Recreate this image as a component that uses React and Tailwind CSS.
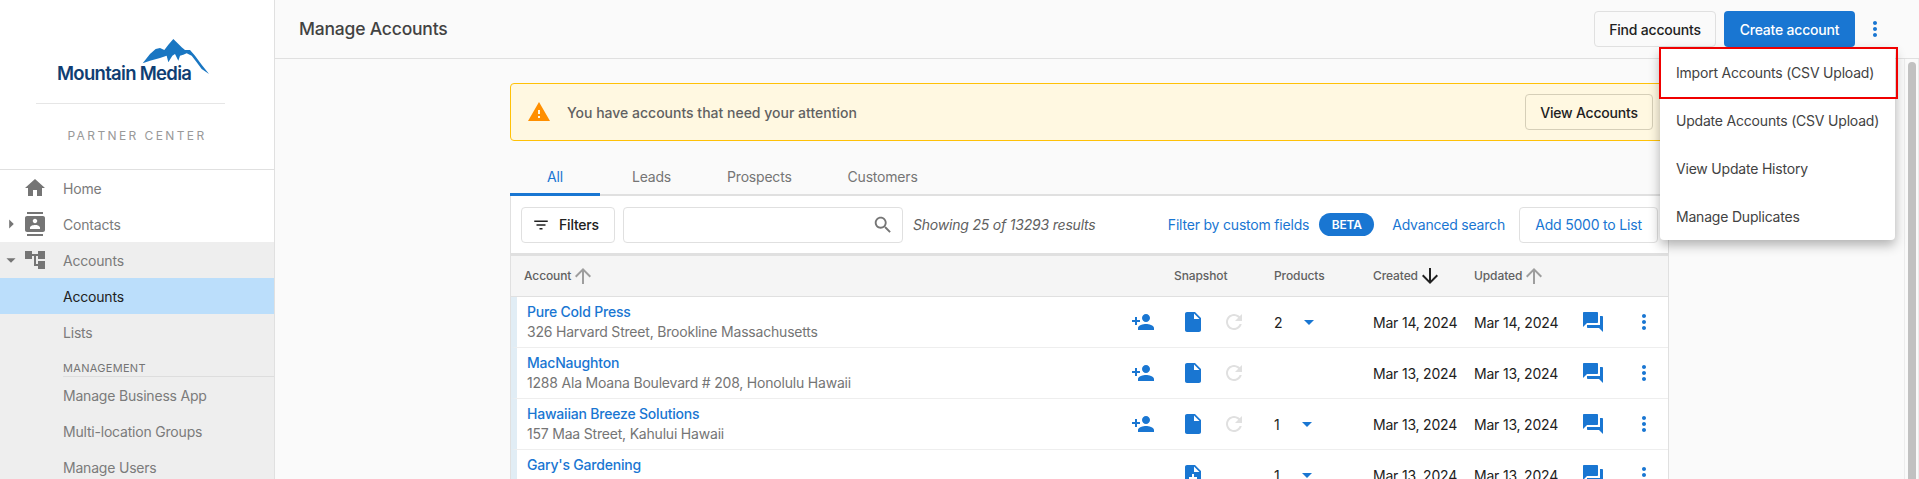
const paths = {
  home: "M10 20v-6h4v6h5v-8h3L12 3 2 12h3v8z",
  contacts:
    "M20 0H4v2h16V0zM4 24h16v-2H4v2zM20 4H4c-1.1 0-2 .9-2 2v12c0 1.1.9 2 2 2h16c1.1 0 2-.9 2-2V6c0-1.1-.9-2-2-2zm-8 2.75c1.24 0 2.25 1.01 2.25 2.25s-1.01 2.25-2.25 2.25S9.75 10.24 9.75 9 10.76 6.75 12 6.75zM17 17H7v-1.5c0-1.67 3.33-2.5 5-2.5s5 .83 5 2.5V17z",
  tree: "M22 11V3h-7v3H9V3H2v8h7V8h2v10h4v3h7v-8h-7v3h-2V8h2v3z",
  caretRight: "M10 17l5-5-5-5v10z",
  caretDown: "M7 10l5 5 5-5z",
  personAdd:
    "M15 12c2.21 0 4-1.79 4-4s-1.79-4-4-4-4 1.79-4 4 1.79 4 4 4zm-9-2V7H4v3H1v2h3v3h2v-3h3v-2H6zm9 4c-2.67 0-8 1.34-8 4v2h16v-2c0-2.66-5.33-4-8-4z",
  file: "M6 2c-1.1 0-1.99.9-1.99 2L4 20c0 1.1.89 2 1.99 2H18c1.1 0 2-.9 2-2V8l-6-6H6zm7 7V3.5L18.5 9H13z",
  noteAdd:
    "M14 2H6c-1.1 0-1.99.9-1.99 2L4 20c0 1.1.89 2 1.99 2H18c1.1 0 2-.9 2-2V8l-6-6zm2 14h-3v3h-2v-3H8v-2h3v-3h2v3h3v2zm-3-7V3.5L18.5 9H13z",
  refresh:
    "M17.65 6.35C16.2 4.9 14.21 4 12 4c-4.42 0-7.99 3.58-7.99 8s3.57 8 7.99 8c3.73 0 6.84-2.55 7.73-6h-2.08c-.82 2.33-3.04 4-5.65 4-3.31 0-6-2.69-6-6s2.69-6 6-6c1.66 0 3.14.69 4.22 1.78L13 11h7V4l-2.35 2.35z",
  forum:
    "M21 6h-2v9H6v2c0 .55.45 1 1 1h11l4 4V7c0-.55-.45-1-1-1zm-4 6V3c0-.55-.45-1-1-1H3c-.55 0-1 .45-1 1v14l4-4h10c.55 0 1-.45 1-1z",
  more: "M12 8c1.1 0 2-.9 2-2s-.9-2-2-2-2 .9-2 2 .9 2 2 2zm0 2c-1.1 0-2 .9-2 2s.9 2 2 2 2-.9 2-2-.9-2-2-2zm0 6c-1.1 0-2 .9-2 2s.9 2 2 2 2-.9 2-2-.9-2-2-2z",
  warning: "M1 21h22L12 2 1 21zm12-3h-2v-2h2v2zm0-4h-2v-4h2v4z",
  filter: "M10 18h4v-2h-4v2zM3 6v2h18V6H3zm3 7h12v-2H6v2z",
  search:
    "M15.5 14h-.79l-.28-.27C15.41 12.59 16 11.11 16 9.5 16 5.91 13.09 3 9.5 3S3 5.91 3 9.5 5.91 16 9.5 16c1.61 0 3.09-.59 4.23-1.57l.27.28v.79l5 4.99L20.49 19l-4.99-5zm-6 0C7.01 14 5 11.99 5 9.5S7.01 5 9.5 5 14 7.01 14 9.5 11.99 14 9.5 14z",
  up: "M4 12l1.41 1.41L11 7.83V20h2V7.83l5.58 5.59L20 12l-8-8-8 8z",
  down: "M20 12l-1.41-1.41L13 16.17V4h-2v12.17l-5.58-5.59L4 12l8 8 8-8z",
};

function Icon({ name, className = "" }) {
  return (
    <svg viewBox="0 0 24 24" fill="currentColor" className={`shrink-0 ${className}`}>
      <path d={paths[name]} />
    </svg>
  );
}

const navTop = [
  { label: "Home", icon: "home" },
  { label: "Contacts", icon: "contacts", caret: "caretRight" },
];

const navSub = ["Manage Business App", "Multi-location Groups", "Manage Users"];

function NavRow({ label, icon, caret, className = "" }) {
  return (
    <div className={`flex h-9 items-center text-[14px] text-[#7b7b7b] ${className}`}>
      <div className="flex w-[22px] justify-center">
        {caret && <Icon name={caret} className="h-[22px] w-[22px] text-[#757575]" />}
      </div>
      <div className="flex w-[26px] justify-center">
        {icon && <Icon name={icon} className="h-6 w-6 text-[#757575]" />}
      </div>
      <span className="ml-[15px]">{label}</span>
    </div>
  );
}

function Sidebar() {
  return (
    <aside className="flex h-full w-[275px] shrink-0 flex-col border-r border-[#e0e0e0] bg-white">
      <div className="h-[170px] shrink-0 border-b border-[#e0e0e0]">
        <div className="relative ml-9 h-[104px] w-[189px] border-b border-[#e6e6e6]">
          <span className="absolute left-[21px] top-[61px] text-[18.5px] font-semibold leading-6 tracking-[-0.7px] text-[#0f3e73]">
            Mountain Media
          </span>
          <svg viewBox="0 0 240 150" className="absolute left-[99px] top-[34px] h-[50px] w-[80px]" fill="#1976c2">
            <path d="M23 88 L45 60 L62 45 L75 42 L88 48 L100 32 L115 15 L128 28 L140 40 L150 48 L165 48 L180 65 L200 92 L222 120 L200 105 L185 85 L170 65 L155 58 L145 62 L135 65 L130 80 L120 60 L112 65 L100 85 L95 65 L75 72 L45 80 Z" />
          </svg>
        </div>
        <div className="mt-[24px] text-center text-[12px] leading-4 tracking-[2.4px] text-[#999999]">PARTNER CENTER</div>
      </div>
      <div className="bg-white">
        {navTop.map((item) => (
          <NavRow key={item.label} {...item} />
        ))}
      </div>
      <div className="flex-1 overflow-hidden bg-[#eeeeee]">
        <NavRow label="Accounts" icon="tree" caret="caretDown" />
        <NavRow label="Accounts" className="bg-[#bbdefb] !text-[#212121]" />
        <NavRow label="Lists" />
        <div className="ml-[63px] mt-[10px] border-b border-[#dddddd] text-[11px] leading-4 tracking-[0.3px] text-[#757575]">
          MANAGEMENT
        </div>
        {navSub.map((label) => (
          <NavRow key={label} label={label} />
        ))}
      </div>
    </aside>
  );
}

function Header() {
  return (
    <header className="flex h-[59px] shrink-0 items-center justify-between border-b border-[#e0e0e0] pl-6 pr-[32px]">
      <h1 className="text-[17.5px] font-medium text-[#424242]">Manage Accounts</h1>
      <div className="flex items-center">
        <button className="h-9 w-[122px] rounded border border-[#e0e0e0] text-[14px] font-[450] text-[#212121]">
          Find accounts
        </button>
        <button className="ml-2 h-9 w-[131px] rounded bg-[#1976d2] text-[14px] font-[450] text-white">
          Create account
        </button>
        <Icon name="more" className="ml-2 h-6 w-6 text-[#1976d2]" />
      </div>
    </header>
  );
}

function Banner() {
  return (
    <div className="flex h-[58px] items-center rounded border border-[#ffc107] bg-[#fff8e1] pl-[16px] pr-[15px]">
      <Icon name="warning" className="h-6 w-6 text-[#ff8f00]" />
      <span className="ml-4 flex-1 text-[14px] font-medium tracking-normal text-[#616161]">
        You have accounts that need your attention
      </span>
      <button className="h-9 w-[128px] rounded border border-[#d6cfb8] text-[14px] font-[450] text-[#212121]">
        View Accounts
      </button>
    </div>
  );
}

function Tabs() {
  return (
    <div className="mt-[18px] flex h-[37px] gap-2 border-b-2 border-[#e0e0e0] text-[14px] text-[#757575]">
      <div className="-mb-0.5 flex w-[90px] items-center justify-center border-b-[3px] border-[#1976d2] text-[#1976d2]">All</div>
      <div className="flex items-center px-6">Leads</div>
      <div className="flex items-center px-6">Prospects</div>
      <div className="flex items-center px-6">Customers</div>
    </div>
  );
}

function Toolbar() {
  return (
    <div className="flex h-[60px] items-center border-b-[3px] border-[#e0e0e0] bg-white pl-[10px] text-[14px]">
      <button className="flex h-9 w-[94px] items-center rounded border border-[#e0e0e0] pl-[10px] font-[450] text-[#212121]">
        <Icon name="filter" className="mr-[9px] h-[18px] w-[18px]" />
        Filters
      </button>
      <div className="ml-2 flex h-9 w-[280px] items-center justify-end rounded border border-[#e0e0e0] pr-2">
        <Icon name="search" className="h-[22px] w-[22px] text-[#757575]" />
      </div>
      <span className="ml-[10px] italic text-[#616161]">Showing 25 of 13293 results</span>
      <div className="ml-auto flex items-center pr-[10px] text-[#1976d2]">
        <span>Filter by custom fields</span>
        <span className="ml-[10px] flex h-[23px] w-[55px] items-center justify-center rounded-full bg-[#1976d2] text-[12px] font-semibold text-white">
          BETA
        </span>
        <span className="ml-[18px]">Advanced search</span>
        <button className="ml-[14px] h-9 w-[139px] rounded border border-[#e0e0e0]">Add 5000 to List</button>
      </div>
    </div>
  );
}

const columns = "grid grid-cols-[1fr_44px_109px_99px_101px_107px_40px_47px] items-center";

function SortHead({ label, dir, dark }) {
  return (
    <div className="flex items-center">
      {label}
      <Icon name={dir} className={`h-6 w-6 ${dark ? "text-[#212121]" : "text-[#9e9e9e]"}`} />
    </div>
  );
}

function TableHead() {
  return (
    <div className={`${columns} h-[41px] border-b border-[#e0e0e0] bg-[#f5f5f5] text-[12px] font-medium tracking-[-0.1px] text-[#616161]`}>
      <div className="pl-[13px]">
        <SortHead label="Account" dir="up" />
      </div>
      <div />
      <div className="pl-[9px]">Snapshot</div>
      <div>Products</div>
      <SortHead label="Created" dir="down" dark />
      <SortHead label="Updated" dir="up" />
    </div>
  );
}

const rows = [
  { name: "Pure Cold Press", address: "326 Harvard Street, Brookline Massachusetts", products: "2", created: "Mar 14, 2024", updated: "Mar 14, 2024" },
  { name: "MacNaughton", address: "1288 Ala Moana Boulevard # 208, Honolulu Hawaii", created: "Mar 13, 2024", updated: "Mar 13, 2024" },
  { name: "Hawaiian Breeze Solutions", address: "157 Maa Street, Kahului Hawaii", products: "1", created: "Mar 13, 2024", updated: "Mar 13, 2024" },
  { name: "Gary's Gardening", address: "\u00a0", products: "1", created: "Mar 13, 2024", updated: "Mar 13, 2024", noteAdd: true },
];

function Row({ row }) {
  return (
    <div className={`${columns} h-[51px] border-b border-l-[6px] border-[#eeeeee] border-l-[#e1edf5] bg-white text-[14px]`}>
      <div className="pl-[10px] leading-[20px]">
        <div className="font-medium text-[#1976d2]">{row.name}</div>
        <div className="text-[#757575]">{row.address}</div>
      </div>
      <div className="flex justify-center">
        {!row.noteAdd && <Icon name="personAdd" className="h-6 w-6 text-[#1976d2]" />}
      </div>
      <div className="flex items-center pl-[16px]">
        <Icon name={row.noteAdd ? "noteAdd" : "file"} className="h-6 w-6 text-[#1976d2]" />
        {!row.noteAdd && <Icon name="refresh" className="ml-[17px] h-6 w-6 text-[#e0e0e0]" />}
      </div>
      <div className="flex items-center text-[#212121]">
        {row.products && <span className="mr-[15px]">{row.products}</span>}
        {row.products && <Icon name="caretDown" className="h-6 w-6 text-[#1976d2]" />}
      </div>
      <div className="text-[#212121]">{row.created}</div>
      <div className="text-[#212121]">{row.updated}</div>
      <Icon name="forum" className="h-6 w-6 text-[#1976d2]" />
      <div className="flex pl-[11px]">
        <Icon name="more" className="h-6 w-6 text-[#1976d2]" />
      </div>
    </div>
  );
}

const menuItems = ["Import Accounts (CSV Upload)", "Update Accounts (CSV Upload)", "View Update History", "Manage Duplicates"];

function ActionsMenu() {
  return (
    <div className="absolute left-[1660px] top-[48px] w-[235px] rounded bg-white shadow-[0_5px_12px_rgba(0,0,0,0.3)]">
      {menuItems.map((item) => (
        <div key={item} className="flex h-12 items-center pl-4 text-[14px] text-[#424242]">
          {item}
        </div>
      ))}
      <div className="absolute -left-[1px] -top-[1px] h-[52px] w-[239px] border-2 border-[#f00000]" />
    </div>
  );
}

export default function App() {
  return (
    <div className="relative flex h-[479px] w-[1919px] overflow-hidden bg-[#fafafa] font-['Inter',sans-serif] tracking-[-0.2px]">
      <Sidebar />
      <div className="flex h-full min-w-0 flex-1 flex-col">
        <Header />
        <div className="flex min-h-0 flex-1">
          <main className="min-w-0 flex-1 overflow-hidden pl-[235px] pr-[235px] pt-[24px]">
            <Banner />
            <Tabs />
            <div className="border-x border-[#e0e0e0]">
              <Toolbar />
              <TableHead />
              {rows.map((row) => (
                <Row key={row.name} row={row} />
              ))}
            </div>
          </main>
          <div className="w-[15px] shrink-0 border-x border-[#ececec] pl-[3px] pt-[3px]">
            <div className="h-[500px] w-2 rounded-full bg-[#c1c1c1]" />
          </div>
        </div>
      </div>
      <ActionsMenu />
    </div>
  );
}
